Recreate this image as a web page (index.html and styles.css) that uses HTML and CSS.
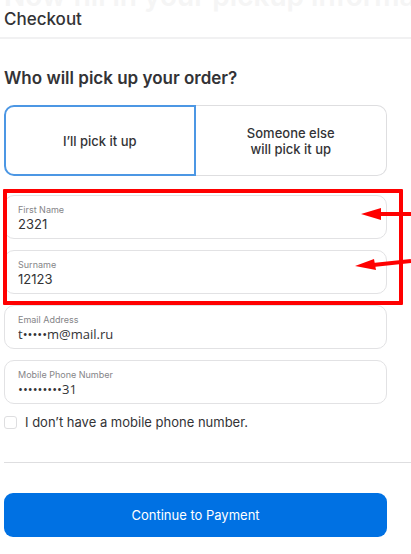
FILE: index.html
```
<!DOCTYPE html>
<html lang="en">
<head>
<meta charset="utf-8">
<meta name="viewport" content="width=device-width, initial-scale=1">
<title>Checkout</title>
<link rel="stylesheet" href="styles.css">
</head>
<body>
<header class="bar">
  <p class="ghost">Now fill in your pickup information</p>
  <h1 class="bar-title">Checkout</h1>
</header>
<main>
  <form class="form">
    <h2 class="question">Who will pick up your order?</h2>
    <div class="choices">
      <button class="choice selected" type="button" aria-pressed="true">I’ll pick it up</button>
      <button class="choice" type="button" aria-pressed="false">Someone else<br>will pick it up</button>
    </div>
    <div class="fields">
      <div class="marked">
        <div class="field">
          <label for="first">First Name</label>
          <input id="first" type="text" value="2321">
        </div>
        <div class="field">
          <label for="surname">Surname</label>
          <input id="surname" type="text" value="12123">
        </div>
        <div class="outline"></div>
        <svg class="arrows" width="60" height="80" viewBox="0 0 60 80" aria-hidden="true">
          <path class="shaft" d="M28 19H60M22 70L60 66"/>
          <path class="tip" d="M10 19L30 13V25ZM4 71L23 64L25 75Z"/>
        </svg>
      </div>
      <div class="field">
        <label for="email">Email Address</label>
        <input class="masked" id="email" type="text" value="t•••••m@mail.ru">
      </div>
      <div class="field">
        <label for="phone">Mobile Phone Number</label>
        <input class="masked" id="phone" type="text" value="•••••••••31">
      </div>
    </div>
    <label class="check"><input type="checkbox">I don’t have a mobile phone number.</label>
    <hr class="rule">
    <button class="submit" type="button">Continue to Payment</button>
  </form>
</main>
</body>
</html>
```
FILE: styles.css
```
* {
  box-sizing: border-box;
}

body {
  margin: 0;
  overflow-x: hidden;
  background: #fff;
  color: #333336;
  font-family: Inter, "Liberation Sans", sans-serif;
}

.bar {
  position: relative;
  overflow: hidden;
  padding: 9px 4px 7px;
  border-bottom: 2px solid #f1f1f2;
}

.ghost {
  position: absolute;
  top: -22px;
  left: 4px;
  margin: 0;
  color: #f5f5f5;
  font-size: 28px;
  font-weight: 600;
  line-height: 36px;
  white-space: nowrap;
}

.bar-title {
  position: relative;
  margin: 0;
  font-size: 17px;
  font-weight: 500;
  line-height: 21px;
}

.form {
  padding: 28px 24px 16px 4px;
}

.question {
  margin: 0 0 16px;
  font-size: 17px;
  font-weight: 600;
  line-height: 22px;
}

.choices {
  display: grid;
  grid-template-columns: 1fr 1fr;
  margin-bottom: 19px;
}

.choice {
  min-height: 71px;
  padding: 0;
  border: 1px solid #dedee0;
  border-left: 0;
  border-radius: 0 10px 10px 0;
  background: #fff;
  color: #333336;
  font: 500 13px/16px Inter, sans-serif;
}

.choice.selected {
  border: 2px solid #4c97e4;
  border-radius: 10px 0 0 10px;
}

.fields,
.marked {
  display: grid;
  gap: 11px;
}

.marked {
  position: relative;
}

.field {
  display: grid;
  padding: 8px 13px 6px;
  border: 1px solid #e2e2e4;
  border-radius: 10px;
}

.field label {
  color: #858588;
  font-size: 9px;
  line-height: 12px;
}

.field input {
  width: 100%;
  height: 16px;
  padding: 0;
  border: 0;
  outline: 0;
  background: none;
  color: #333336;
  font: 400 13px/16px Inter, sans-serif;
}

.field .masked {
  font-family: "Open Sans", sans-serif;
}

.outline {
  position: absolute;
  inset: -6px -16px -11px -1px;
  border: 4px solid #f00;
  border-radius: 1px;
}

.arrows {
  position: absolute;
  top: 0;
  right: -24px;
}

.shaft {
  fill: none;
  stroke: #f00;
  stroke-width: 4;
}

.tip {
  fill: #f00;
}

.check {
  display: flex;
  align-items: center;
  gap: 8px;
  margin-top: 10px;
  font-size: 13px;
  line-height: 16px;
}

.check input {
  appearance: none;
  width: 13px;
  height: 13px;
  margin: 0;
  border: 1px solid #dedee0;
  border-radius: 3px;
}

.rule {
  margin: 32px -24px 30px 0;
  border: 0;
  border-top: 1px solid #dedee0;
}

.submit {
  display: block;
  width: 100%;
  padding: 14px;
  border: 0;
  border-radius: 9px;
  background: #0071e3;
  color: #fff;
  font: 400 13px/16px Inter, sans-serif;
}
```
